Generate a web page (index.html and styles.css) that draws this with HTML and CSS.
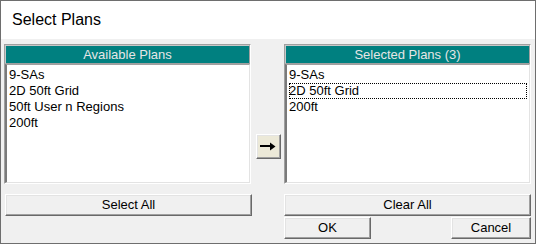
FILE: index.html
```html
<!DOCTYPE html>
<html>
<head>
<meta charset="utf-8">
<link rel="stylesheet" href="styles.css">
</head>
<body>
<div class="window">
  <div class="titlebar">Select Plans</div>
  <div class="client">
    <div class="col col-left">
      <div class="panel">
        <div class="panel-head">Available Plans</div>
        <div class="listbox">
          <div class="item">9-SAs</div>
          <div class="item">2D 50ft Grid</div>
          <div class="item">50ft User n Regions</div>
          <div class="item">200ft</div>
        </div>
      </div>
      <div class="btn btn-wide">Select All</div>
    </div>
    <div class="mid">
      <div class="btn arrow-btn">
        <svg width="17" height="9" viewBox="0 0 17 9"><path d="M0 4h12" stroke="#000" stroke-width="2"/><path d="M10 0.5L15.5 4.5L10 8.5Z" fill="#000"/></svg>
      </div>
    </div>
    <div class="col col-right">
      <div class="panel">
        <div class="panel-head">Selected Plans (3)</div>
        <div class="listbox">
          <div class="item">9-SAs</div>
          <div class="item focus">2D 50ft Grid</div>
          <div class="item">200ft</div>
        </div>
      </div>
      <div class="btn btn-wide">Clear All</div>
      <div class="btn-row">
        <div class="btn btn-ok">OK</div>
        <div class="btn btn-cancel">Cancel</div>
      </div>
    </div>
  </div>
</div>
</body>
</html>
```
FILE: styles.css
```css
html, body {
  margin: 0;
  padding: 0;
  background: #ffffff;
}
.window {
  width: 536px;
  height: 244px;
  box-sizing: border-box;
  border: 1px solid #6e6e6e;
  background: #f0f0f0;
  display: flex;
  flex-direction: column;
  font-family: "Liberation Sans", Arial, sans-serif;
  color: #000;
}
.titlebar {
  height: 38px;
  background: #ffffff;
  font-size: 16px;
  line-height: 38px;
  padding-left: 11px;
  box-sizing: border-box;
  padding-bottom: 1px;
}
.client {
  flex: 1;
  display: flex;
  padding: 5px 4px 0 3px;
}
.col {
  display: flex;
  flex-direction: column;
}
.col-left { width: 248px; }
.col-right { width: 247px; }
.mid {
  width: 25px;
  margin: 0 3px 0 4px;
  padding-top: 90px;
}
.panel {
  width: 247px;
  height: 140px;
  box-sizing: border-box;
  border: 1px solid;
  border-color: #a0a0a0 #ffffff #ffffff #a0a0a0;
  display: flex;
  flex-direction: column;
}
.panel-head {
  height: 19px;
  box-sizing: border-box;
  background: #008080;
  border: 1px solid;
  border-color: #c8c8c8 #a0a0a0 #a0a0a0 #c8c8c8;
  color: #e6e6e6;
  font-size: 13px;
  line-height: 17px;
  text-align: center;
}
.listbox {
  flex: 1;
  background: #ffffff;
  border-top: 1px solid #a0a0a0;
  border-left: 2px solid #7a7a7a;
  border-right: 1px solid #e3e3e3;
  border-bottom: 1px solid #e3e3e3;
  padding: 2px 0 0 2px;
  font-size: 13px;
}
.item {
  height: 16px;
  line-height: 16px;
  box-sizing: border-box;
  padding-left: 0;
}
.item.focus {
  outline: 1px dotted #000;
  outline-offset: -1px;
  margin-right: 2px;
}
.btn {
  box-sizing: border-box;
  background: #f0f0f0;
  border: 1px solid;
  border-color: #ffffff #696969 #696969 #ffffff;
  box-shadow: inset -1px -1px #a0a0a0, inset 1px 1px #e3e3e3;
  font-size: 13px;
  text-align: center;
  line-height: 20px;
  height: 22px;
}
.btn-wide {
  width: 248px;
  margin-top: 10px;
}
.col-left .btn-wide { margin-left: 1px; width: 247px; }
.col-right .btn-wide { width: 247px; }
.btn-row {
  display: flex;
  justify-content: space-between;
  margin-top: 1px;
}
.btn-ok { width: 87px; }
.btn-cancel { width: 80px; }
.arrow-btn {
  width: 25px;
  height: 25px;
  background: #ece9d8;
  display: flex;
  align-items: center;
  justify-content: center;
}
.arrow-btn svg { display: block; }
```
